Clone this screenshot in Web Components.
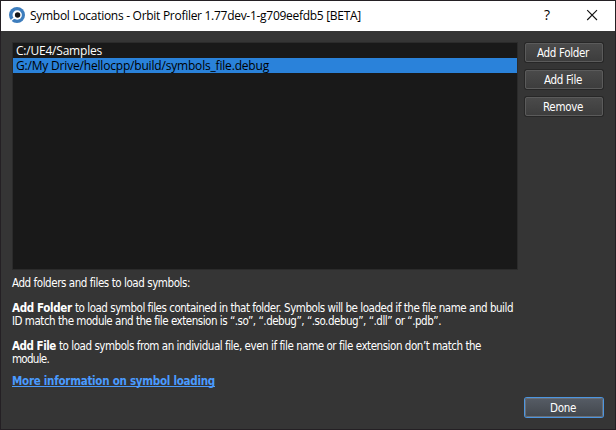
<!DOCTYPE html>
<html lang="en">
<head>
<meta charset="utf-8">
<title>Symbol Locations</title>
<style>
html,body{margin:0;width:616px;height:430px;overflow:hidden;background:#353535}
</style>
</head>
<body>
<symbol-dialog></symbol-dialog>
<script>
// A single line of text whose tracking is adjusted to a given width.
class FitText extends HTMLElement {
  connectedCallback() {
    const root = this.attachShadow({mode: 'open'});
    root.innerHTML = `<style>:host{display:block;white-space:pre}span{display:inline-block}</style><span><slot></slot></span>`;
    const span = root.querySelector('span');
    const fit = () => {
      span.style.letterSpacing = '0px';
      const extra = Number(this.getAttribute('width')) - span.getBoundingClientRect().width;
      span.style.letterSpacing = (extra / this.textContent.length) + 'px';
    };
    fit();
  }
}

class TitleBar extends HTMLElement {
  constructor() {
    super();
    this.attachShadow({mode: 'open'}).innerHTML = `<style>
      :host{display:flex;height:30px;background:#fff;color:#000;font:12px/30px "Open Sans","Noto Sans",sans-serif;padding-left:8px;box-sizing:border-box}
      .logo{width:16px;height:16px;margin:6px 5px 0 0}
      .text{flex:1}
      .help{width:46px;text-align:center;font-size:14px;line-height:28px}
      .close{width:45px;height:30px}
    </style>
    <svg class="logo" viewBox="0 0 16 16"><circle cx="8" cy="8" r="8" fill="#3d7dbd"/><circle cx="8.2" cy="8" r="4.7" fill="#fff"/><circle cx="8.6" cy="8" r="2.7" fill="#151515"/><path d="M4.9 11 2 13.8" stroke="#fff" stroke-width="1.2"/></svg>
    <div class="text"><slot></slot></div>
    <div class="help">?</div>
    <svg class="close" viewBox="0 0 45 30"><path d="M17.2 9.2 27 19M27 9.2 17.2 19" stroke="#111" stroke-width="1.1"/></svg>`;
  }
}

class PathList extends HTMLElement {
  constructor() {
    super();
    this.attachShadow({mode: 'open'}).innerHTML = `<style>
      :host{display:block;box-sizing:border-box;width:506px;height:228px;background:#191919;border:1px solid #2b2b2b;font:12px/15px "Open Sans","Noto Sans",sans-serif;color:#fff}
      </style><slot></slot>`;
  }
}

class PathItem extends HTMLElement {
  constructor() {
    super();
    this.attachShadow({mode: 'open'}).innerHTML = `<style>
      :host{display:block;height:15px;padding-left:3px}
      :host([selected]){background:#2a82da;color:#000}
      </style><slot></slot>`;
  }
}

class PushButton extends HTMLElement {
  constructor() {
    super();
    this.attachShadow({mode: 'open'}).innerHTML = `<style>
      :host{display:flex;justify-content:center;box-sizing:border-box;width:78px;height:19px;padding-right:2px;border:1px solid #5b5b5b;border-radius:2px;background:linear-gradient(#4a4a4a,#3d3d3d);box-shadow:0 0 0 1px #272727;font:11.5px/18px "DejaVu Sans Condensed","DejaVu Sans",sans-serif;color:#fff}
      :host([default]){border-color:#686e77;background:linear-gradient(#555b64,#43484e);box-shadow:0 0 0 1px #4d96e0}
      </style><slot></slot>`;
  }
}

class HelpText extends HTMLElement {
  constructor() {
    super();
    this.attachShadow({mode: 'open'}).innerHTML = `<style>
      :host{display:block;font:11.5px/13px "DejaVu Sans Condensed","DejaVu Sans",sans-serif;color:#fff}
      .para{display:block;margin-bottom:12px}
      .row{display:flex}
      .last{margin-bottom:9px}
      b,.link{font-weight:bold}
      .link{color:#4a9bff;display:block;width:203px;height:11px;border-bottom:1px solid #4a9bff}
      </style>
      <div class="para"><fit-text width="178">Add folders and files to load symbols:</fit-text></div>
      <div class="para"><div class="row"><b><fit-text width="63">Add Folder </fit-text></b><fit-text width="438">to load symbol files contained in that folder. Symbols will be loaded if the file name and build</fit-text></div>
      <fit-text width="429">ID match the module and the file extension is “.so”, “.debug”, “.so.debug”, “.dll” or “.pdb”.</fit-text></div>
      <div class="para last"><div class="row"><b><fit-text width="47">Add File </fit-text></b><fit-text width="422">to load symbols from an individual file, even if file name or file extension don’t match the</fit-text></div>
      <fit-text width="37">module.</fit-text></div>
      <a class="link"><fit-text width="203">More information on symbol loading</fit-text></a>`;
  }
}

class SymbolDialog extends HTMLElement {
  constructor() {
    super();
    this.attachShadow({mode: 'open'}).innerHTML = `<style>
      :host{display:block;box-sizing:border-box;width:616px;height:430px;border:1px solid #242024;background:#353535}
      .body{display:flex;padding:11px 11px 0;gap:7px}
      .side{display:flex;flex-direction:column;gap:8px;padding-top:1px}
      help-text{margin:7px 0 0 11px}
      .foot{display:flex;justify-content:flex-end;padding:11px 12px 0 0}
      </style>
      <title-bar><fit-text width="331">Symbol Locations - Orbit Profiler 1.77dev-1-g709eefdb5 [BETA]</fit-text></title-bar>
      <div class="body">
        <path-list>
          <path-item><fit-text width="86">C:/UE4/Samples</fit-text></path-item>
          <path-item selected><fit-text width="253">G:/My Drive/hellocpp/build/symbols_file.debug</fit-text></path-item>
        </path-list>
        <div class="side">
          <push-button><fit-text width="52">Add Folder</fit-text></push-button>
          <push-button><fit-text width="38">Add File</fit-text></push-button>
          <push-button><fit-text width="40">Remove</fit-text></push-button>
        </div>
      </div>
      <help-text></help-text>
      <div class="foot"><push-button default><fit-text width="26">Done</fit-text></push-button></div>`;
  }
}
customElements.define('title-bar', TitleBar);
customElements.define('path-list', PathList);
customElements.define('path-item', PathItem);
customElements.define('push-button', PushButton);
customElements.define('help-text', HelpText);
customElements.define('symbol-dialog', SymbolDialog);
customElements.define('fit-text', FitText);
</script>
</body>
</html>
